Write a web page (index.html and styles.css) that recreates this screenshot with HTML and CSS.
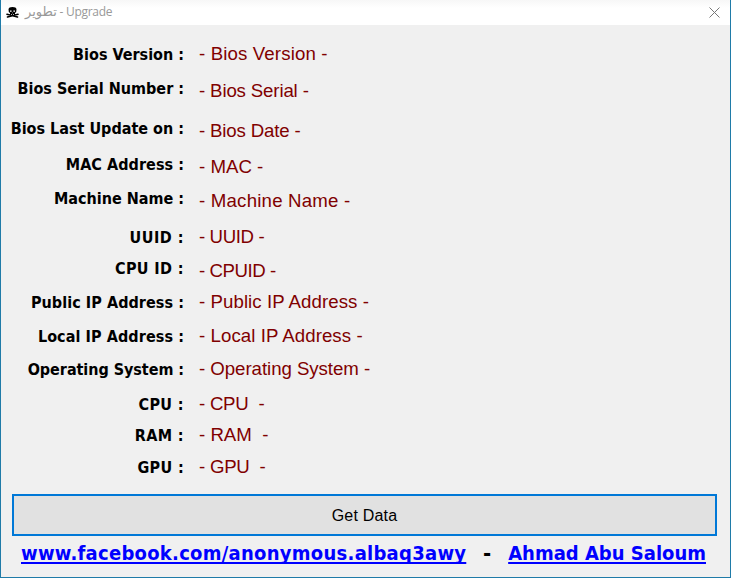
FILE: index.html
```
<!DOCTYPE html>
<html lang="en">
<head>
<meta charset="utf-8">
<title>تطوير - Upgrade</title>
<link rel="stylesheet" href="styles.css">
</head>
<body>
<div class="window">
  <header class="titlebar">
    <svg class="skull" width="13" height="13" viewBox="0 0 13 13" aria-hidden="true">
      <path d="M1 8.3 11.5 11M12 8.3 1.5 11" stroke="#000" stroke-width="1.6" stroke-linecap="round"/>
      <path d="M2.5 3.2Q2.8 1 6.5 1t4 2.2L10.2 6 9 7v2H4V7L2.8 6Z"/>
      <path d="M4 4.5h1.6v1.3H4zM7.4 4.5H9v1.3H7.4zM6.2 6.5h.7v.8h-.7zM5 8h.7v1H5zM7.3 8H8v1h-.7z" fill="#fff"/>
    </svg>
    <h1 class="title" dir="ltr"><span class="arabic" lang="ar">تطوير</span><span class="latin"> - Upgrade</span></h1>
    <svg class="close" width="11" height="11" viewBox="0 0 11 11" role="img" aria-label="Close"><path d="M.5.5l10 10M10.5.5l-10 10" stroke="#777" fill="none"/></svg>
  </header>
  <main>
    <div class="info">
      <div class="labels">
        <span class="l1">Bios Version :</span>
        <span class="l2">Bios Serial Number :</span>
        <span class="l3">Bios Last Update on :</span>
        <span class="l4">MAC Address :</span>
        <span class="l5">Machine Name :</span>
        <span class="l6">UUID :</span>
        <span class="l7">CPU ID :</span>
        <span class="l8">Public IP Address :</span>
        <span class="l9">Local IP Address :</span>
        <span class="l10">Operating System :</span>
        <span class="l11">CPU :</span>
        <span class="l12">RAM :</span>
        <span class="l13">GPU :</span>
      </div>
      <div class="values">
        <span class="v1">- Bios Version -</span>
        <span class="v2">- Bios Serial -</span>
        <span class="v3">- Bios Date -</span>
        <span class="v4">- MAC -</span>
        <span class="v5">- Machine Name -</span>
        <span class="v6">- UUID -</span>
        <span class="v7">- CPUID -</span>
        <span class="v8">- Public IP Address -</span>
        <span class="v9">- Local IP Address -</span>
        <span class="v10">- Operating System -</span>
        <span class="v11">- CPU  -</span>
        <span class="v12">- RAM  -</span>
        <span class="v13">- GPU  -</span>
      </div>
    </div>
    <button class="get" type="button">Get Data</button>
    <footer class="links">
      <a class="fb" href="#">www.facebook.com/anonymous.albaq3awy</a>
      <span class="dash">-</span>
      <a class="author" href="#">Ahmad Abu Saloum</a>
    </footer>
  </main>
</div>
</body>
</html>
```
FILE: styles.css
```
* { box-sizing: border-box; }
body { margin: 0; background: #f0f0f0; overflow: hidden; }
.window {
  width: 731px; height: 578px;
  border: 1px solid #1f7ba8; border-top: 0;
  background: #f0f0f0;
}
.titlebar {
  height: 25px; display: flex; align-items: center;
  padding: 0 10px 1px 5px;
  background: linear-gradient(#f7f7f7, #fff 8px);
}
.skull { margin-right: 6px; }
.title {
  margin: 0; flex: 1; display: flex; white-space: pre;
  font: 400 12px/24px "Open Sans", "Noto Sans", sans-serif; color: #999;
}
.arabic { font-family: "DejaVu Sans", sans-serif; font-size: 13px; }
.latin { letter-spacing: -.3px; }
.info { display: flex; height: 469px; }
.labels, .values { display: flex; flex-direction: column; white-space: pre; }
.labels {
  width: 183px; padding-top: 1px; align-items: flex-end;
  font: 700 16px/20px "DejaVu Sans Condensed", "DejaVu Sans", sans-serif;
  font-stretch: condensed; color: #000;
}
.values {
  margin-left: 15px; align-items: flex-start;
  font: 18.67px/20px "Liberation Sans", Arial, sans-serif; color: #800000;
}
.l1 { margin-top: 19px; }
.l2 { margin-top: 14px; }
.l3 { margin-top: 20px; }
.l4 { margin-top: 16px; letter-spacing: .05px; }
.l5 { margin-top: 14px; }
.l6 { margin-top: 19px; letter-spacing: .5px; }
.l7 { margin-top: 11px; letter-spacing: .4px; }
.l8 { margin-top: 14px; letter-spacing: .06px; }
.l9 { margin-top: 14px; letter-spacing: .08px; }
.l10 { margin-top: 13px; letter-spacing: -.05px; }
.l11 { margin-top: 15px; letter-spacing: .4px; }
.l12 { margin-top: 11px; letter-spacing: .4px; }
.l13 { margin-top: 12px; letter-spacing: .35px; }
.v1 { margin-top: 19px; letter-spacing: .13px; }
.v2 { margin-top: 17px; letter-spacing: -.15px; }
.v3 { margin-top: 20px; letter-spacing: -.17px; }
.v4 { margin-top: 16px; }
.v5 { margin-top: 14px; letter-spacing: .2px; }
.v6 { margin-top: 16px; letter-spacing: -.4px; }
.v7 { margin-top: 14px; letter-spacing: -.45px; }
.v8 { margin-top: 11px; letter-spacing: .06px; }
.v9 { margin-top: 14px; letter-spacing: .06px; }
.v10 { margin-top: 13px; letter-spacing: -.05px; }
.v11 { margin-top: 15px; letter-spacing: -.25px; }
.v12 { margin-top: 11px; }
.v13 { margin-top: 12px; letter-spacing: -.25px; }
.get {
  display: block; width: 705px; height: 42px; margin: 0 0 0 11px; padding: 2px 0 0;
  border: 2px solid #0078d7; background: #e1e1e1; color: #000;
  font: 16px/20px "Liberation Sans", Arial, sans-serif; letter-spacing: .2px;
}
.links {
  display: flex; justify-content: space-between; padding: 4px 24px 0 20px;
  font: 700 20px/26px "DejaVu Sans Condensed", "DejaVu Sans", sans-serif;
  font-stretch: condensed;
}
.links a { color: #00f; text-decoration: underline 2px; text-underline-offset: 2px; text-decoration-skip-ink: none; }
.fb { letter-spacing: .27px; }
.dash { font-size: 22px; padding-top: 1px; }
```
